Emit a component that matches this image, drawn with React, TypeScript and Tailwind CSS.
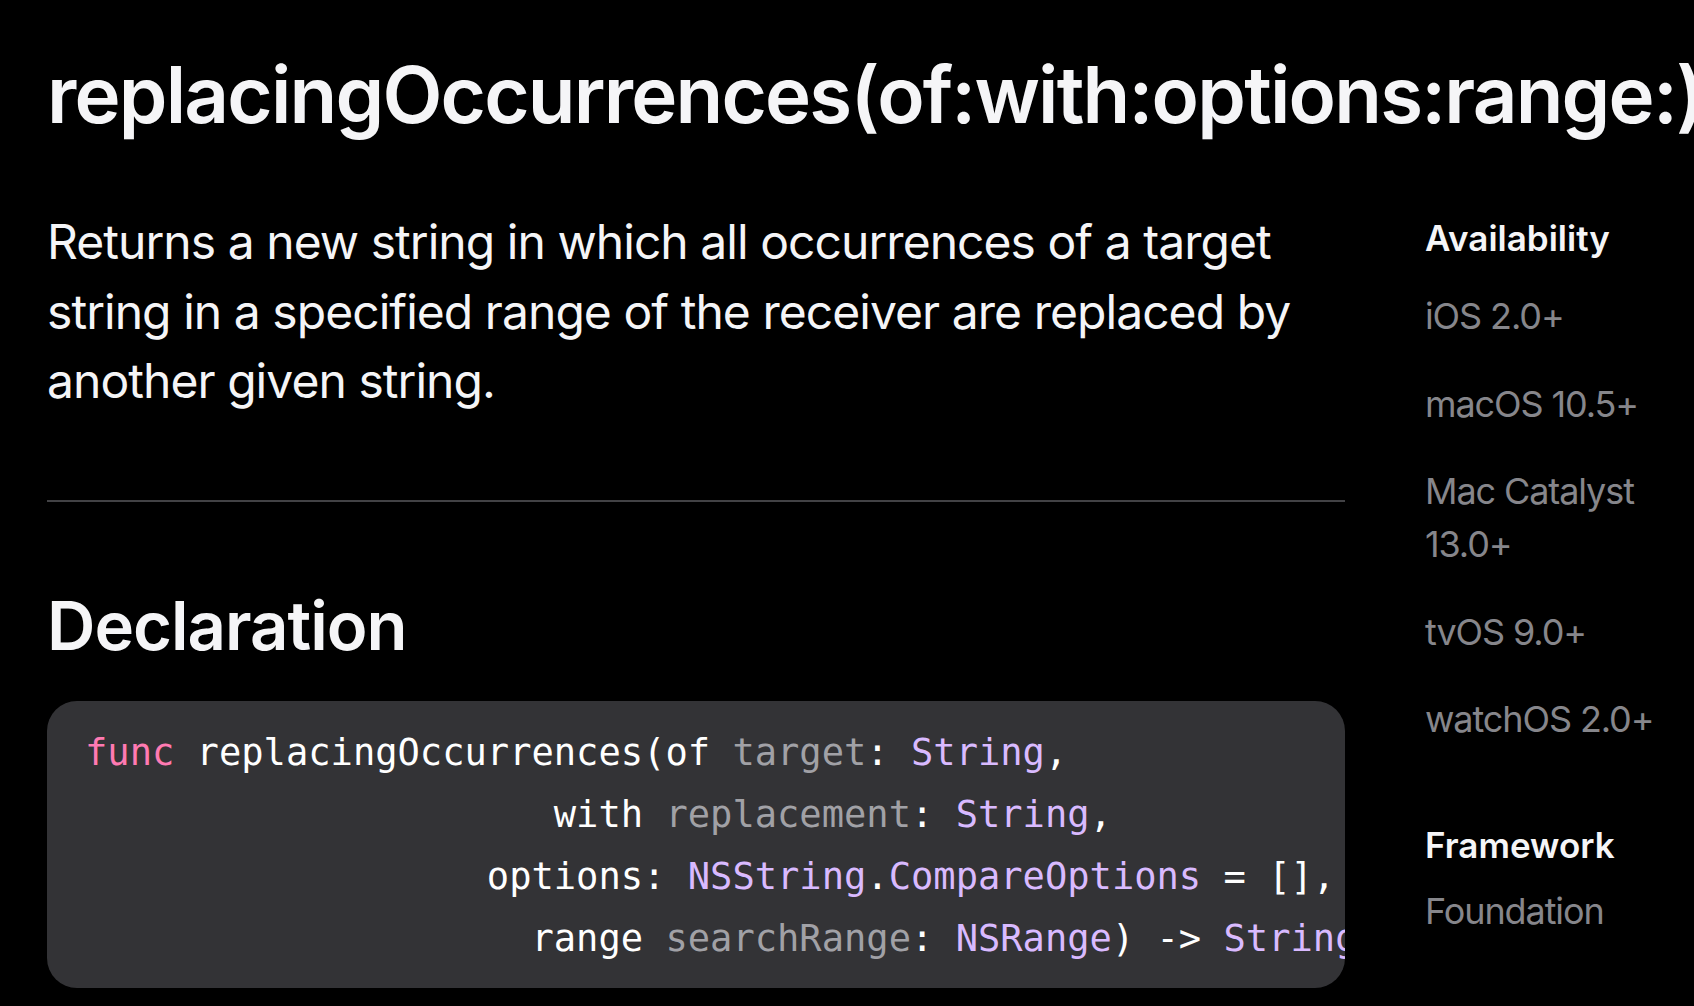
import React from "react";

const sans = "font-['Inter','Noto_Sans','Liberation_Sans',sans-serif]";
const mono = "font-['DejaVu_Sans_Mono','Liberation_Mono',monospace]";

type Tok = { t: string; c?: "kw" | "param" | "type" };

const codeLines: Tok[][] = [
  [
    { t: "func", c: "kw" },
    { t: " replacingOccurrences(of " },
    { t: "target", c: "param" },
    { t: ": " },
    { t: "String", c: "type" },
    { t: "," },
  ],
  [
    { t: "                     with " },
    { t: "replacement", c: "param" },
    { t: ": " },
    { t: "String", c: "type" },
    { t: "," },
  ],
  [
    { t: "                  options: " },
    { t: "NSString", c: "type" },
    { t: "." },
    { t: "CompareOptions", c: "type" },
    { t: " = []," },
  ],
  [
    { t: "                    range " },
    { t: "searchRange", c: "param" },
    { t: ": " },
    { t: "NSRange", c: "type" },
    { t: ") -> " },
    { t: "String", c: "type" },
  ],
];

const tokColor = (c?: Tok["c"]) => {
  if (c === "kw") return "text-[#ff7ab2]";
  if (c === "param") return "text-[#a1a1a6]";
  if (c === "type") return "text-[#d9baff]";
  return "text-[#ffffff]";
};

const availability = ["iOS 2.0+", "macOS 10.5+", "Mac Catalyst 13.0+", "tvOS 9.0+", "watchOS 2.0+"];

export default function App() {
  return (
    <div className={`w-screen h-screen overflow-hidden bg-black text-[#f5f5f7] ${sans}`}>
      <div className="pl-[47px]">
        {/* Title */}
        <h1 className="pt-[52px] text-[78px] leading-[86px] font-semibold tracking-[-1.8px] whitespace-nowrap">
          replacingOccurrences(of:with:options:range:)
        </h1>

        <div className="flex gap-[80px] mt-[69px]">
          {/* Main column */}
          <div className="w-[1298px] shrink-0">
            <p className="text-[48px] leading-[69.5px] font-normal tracking-[-0.95px]">
              Returns a new string in which all occurrences of a target string in a specified range of the receiver
              are replaced by another given string.
            </p>

            <div className="mt-[84px] h-[2px] bg-[#424245]" />

            <h2 className="mt-[84px] text-[67px] leading-[80px] font-semibold tracking-[-1px]">Declaration</h2>

            <div className="mt-[35px] h-[287px] rounded-[30px] bg-[#333336] overflow-hidden pl-[38px] pt-[21px]">
              <pre className={`${mono} text-[37.1px] leading-[62px] whitespace-pre`}>
                {codeLines.map((line, i) => (
                  <div key={i}>
                    {line.map((tok, j) => (
                      <span key={j} className={tokColor(tok.c)}>
                        {tok.t}
                      </span>
                    ))}
                  </div>
                ))}
              </pre>
            </div>
          </div>

          {/* Sidebar */}
          <div className="flex-1 pt-[10px]">
            <h3 className="text-[35px] leading-[42px] font-semibold">Availability</h3>
            <ul className="mt-[31px] flex flex-col gap-[34.5px] text-[36px] leading-[53px] tracking-[-1.1px] text-[#86868b]">
              {availability.map((a) => (
                <li key={a}>{a}</li>
              ))}
            </ul>

            <h3 className="mt-[78px] text-[35px] leading-[42px] font-semibold">Framework</h3>
            <p className="mt-[19px] text-[36px] leading-[53px] tracking-[-1.1px] text-[#86868b]">Foundation</p>
          </div>
        </div>
      </div>
    </div>
  );
}
